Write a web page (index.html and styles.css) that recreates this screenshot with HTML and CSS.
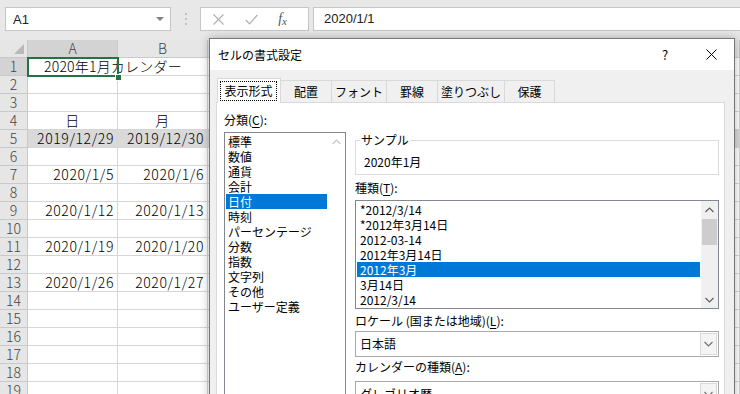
FILE: index.html
```html
<!DOCTYPE html>
<html lang="ja">
<head>
<meta charset="utf-8">
<title>セルの書式設定</title>
<link rel="stylesheet" href="styles.css">
</head>
<body>
<div class="fbar">
  <div class="namebox"><span>A1</span><span class="nb-arrow"></span></div>
  <div class="vdots"><svg width="4" height="14" viewBox="0 0 4 14"><circle cx="2" cy="2" r="1" fill="#b5b5b5"/><circle cx="2" cy="7" r="1" fill="#b5b5b5"/><circle cx="2" cy="12" r="1" fill="#b5b5b5"/></svg></div>
  <div class="fbtns">
    <span class="fb"><svg width="11" height="11" viewBox="0 0 11 11"><path d="M0.5 0.5L10.5 10.5M10.5 0.5L0.5 10.5" stroke="#b0b0b0" stroke-width="1.1" fill="none"/></svg></span>
    <span class="fb"><svg width="13" height="11" viewBox="0 0 13 11"><path d="M0.8 6L4.6 9.8L12.3 1" stroke="#b0b0b0" stroke-width="1.2" fill="none"/></svg></span>
    <span class="fb fx"><i>f</i><i class="fxx">x</i></span>
  </div>
  <div class="finput">2020/1/1</div>
</div>

<div class="sheet">
  <div class="grid">
    <div class="ch corner"><span class="tri"></span></div><div class="ch sel">A</div><div class="ch">B</div><div class="ch"></div>
    <div class="rh sel">1</div><div class="c a1">2020年1月カレンダー</div><div class="c"></div><div class="c"></div>
    <div class="rh">2</div><div class="c"></div><div class="c"></div><div class="c"></div>
    <div class="rh">3</div><div class="c"></div><div class="c"></div><div class="c"></div>
    <div class="rh">4</div><div class="c ctr">日</div><div class="c ctr">月</div><div class="c"></div>
    <div class="rh">5</div><div class="c r fill">2019/12/29</div><div class="c r fill">2019/12/30</div><div class="c fill"></div>
    <div class="rh">6</div><div class="c"></div><div class="c"></div><div class="c"></div>
    <div class="rh">7</div><div class="c r">2020/1/5</div><div class="c r">2020/1/6</div><div class="c"></div>
    <div class="rh">8</div><div class="c"></div><div class="c"></div><div class="c"></div>
    <div class="rh">9</div><div class="c r">2020/1/12</div><div class="c r">2020/1/13</div><div class="c"></div>
    <div class="rh">10</div><div class="c"></div><div class="c"></div><div class="c"></div>
    <div class="rh">11</div><div class="c r">2020/1/19</div><div class="c r">2020/1/20</div><div class="c"></div>
    <div class="rh">12</div><div class="c"></div><div class="c"></div><div class="c"></div>
    <div class="rh">13</div><div class="c r">2020/1/26</div><div class="c r">2020/1/27</div><div class="c"></div>
    <div class="rh">14</div><div class="c"></div><div class="c"></div><div class="c"></div>
    <div class="rh">15</div><div class="c"></div><div class="c"></div><div class="c"></div>
    <div class="rh">16</div><div class="c"></div><div class="c"></div><div class="c"></div>
    <div class="rh">17</div><div class="c"></div><div class="c"></div><div class="c"></div>
    <div class="rh">18</div><div class="c"></div><div class="c"></div><div class="c"></div>
    <div class="rh">19</div><div class="c"></div><div class="c"></div><div class="c"></div>
  </div>
  <div class="selbox"></div>
  <div class="handle"></div>

  <div class="dialog">
    <div class="dtitle">
      <span class="dt-text">セルの書式設定</span>
      <span class="dt-btn">?</span>
      <span class="dt-btn"><svg width="11" height="11" viewBox="0 0 11 11"><path d="M0.5 0.5L10.5 10.5M10.5 0.5L0.5 10.5" stroke="#000" stroke-width="1" fill="none"/></svg></span>
    </div>
    <div class="tabs">
      <div class="tab active w1"><span class="focus">表示形式</span></div>
      <div class="tab w2">配置</div>
      <div class="tab w3">フォント</div>
      <div class="tab w4">罫線</div>
      <div class="tab w5">塗りつぶし</div>
      <div class="tab w6">保護</div>
    </div>
    <div class="panel">
      <div class="col-left">
        <div class="lbl">分類(<u>C</u>):</div>
        <div class="listbox catlist">
          <div class="items">
            <div class="it">標準</div>
            <div class="it">数値</div>
            <div class="it">通貨</div>
            <div class="it">会計</div>
            <div class="it on">日付</div>
            <div class="it">時刻</div>
            <div class="it">パーセンテージ</div>
            <div class="it">分数</div>
            <div class="it">指数</div>
            <div class="it">文字列</div>
            <div class="it">その他</div>
            <div class="it">ユーザー定義</div>
          </div>
          <div class="vscroll off">
            <div class="sbtn"><svg width="9" height="6" viewBox="0 0 9 6"><path d="M0.5 5L4.5 1L8.5 5" stroke="#c8c8c8" stroke-width="1.2" fill="none"/></svg></div>
          </div>
        </div>
      </div>
      <div class="col-right">
        <fieldset class="sample">
          <legend>サンプル</legend>
          <div class="sample-val">2020年1月</div>
        </fieldset>
        <div class="lbl l-type">種類(<u>T</u>):</div>
        <div class="listbox typelist">
          <div class="items">
            <div class="it">*2012/3/14</div>
            <div class="it">*2012年3月14日</div>
            <div class="it">2012-03-14</div>
            <div class="it">2012年3月14日</div>
            <div class="it on">2012年3月</div>
            <div class="it">3月14日</div>
            <div class="it">2012/3/14</div>
          </div>
          <div class="vscroll">
            <div class="sbtn"><svg width="9" height="6" viewBox="0 0 9 6"><path d="M0.5 5L4.5 1L8.5 5" stroke="#606060" stroke-width="1.2" fill="none"/></svg></div>
            <div class="thumb"></div>
            <div class="track"></div>
            <div class="sbtn"><svg width="9" height="6" viewBox="0 0 9 6"><path d="M0.5 1L4.5 5L8.5 1" stroke="#606060" stroke-width="1.2" fill="none"/></svg></div>
          </div>
        </div>
        <div class="lbl l-locale">ロケール (国または地域)(<u>L</u>):</div>
        <div class="combo c-locale"><span class="cv">日本語</span><span class="cbtn"><svg width="9" height="6" viewBox="0 0 9 6"><path d="M0.5 1L4.5 5L8.5 1" stroke="#707070" stroke-width="1.1" fill="none"/></svg></span></div>
        <div class="lbl l-cal">カレンダーの種類(<u>A</u>):</div>
        <div class="combo c-cal"><span class="cv">グレゴリオ暦</span><span class="cbtn"><svg width="9" height="6" viewBox="0 0 9 6"><path d="M0.5 1L4.5 5L8.5 1" stroke="#707070" stroke-width="1.1" fill="none"/></svg></span></div>
      </div>
    </div>
  </div>
</div>
</body>
</html>
```

FILE: styles.css
```css
* { box-sizing: border-box; }
html, body { margin: 0; padding: 0; }
body {
  width: 740px;
  height: 394px;
  overflow: hidden;
  background: #fff;
  font-family: "Noto Sans CJK JP", sans-serif;
}

/* formula bar */
.fbar {
  height: 40px;
  background: #e8e8e8;
  display: flex;
  align-items: flex-start;
  padding: 7px 0 0 5px;
}
.namebox {
  width: 166px;
  height: 24px;
  background: #fff;
  border: 1px solid #c6c6c6;
  display: flex;
  align-items: center;
  justify-content: space-between;
  padding: 0 6px 0 7px;
  font: 13px "Liberation Sans", sans-serif;
  color: #222;
}
.nb-arrow {
  width: 0;
  height: 0;
  border-left: 4px solid transparent;
  border-right: 4px solid transparent;
  border-top: 4px solid #808080;
}
.vdots {
  width: 29px;
  height: 24px;
  display: flex;
  align-items: center;
  justify-content: center;
}
.fbtns {
  width: 109px;
  height: 24px;
  background: #fff;
  border: 1px solid #c6c6c6;
  display: flex;
  align-items: center;
  padding-left: 12px;
}
.fb {
  width: 36px;
  display: flex;
  align-items: center;
}
.fx {
  font: italic 14px "Liberation Serif", serif;
  color: #555;
  padding-left: 2px;
}
.fxx { font-size: 11px; margin-top: 3px; }
.finput {
  flex: 1;
  height: 24px;
  margin-left: 4px;
  background: #fff;
  border: 1px solid #c6c6c6;
  border-right: none;
  padding-left: 10px;
  font: 13px "Liberation Sans", sans-serif;
  line-height: 22px;
  color: #222;
}

/* sheet */
.sheet {
  position: relative;
  height: 354px;
}
.grid {
  display: grid;
  grid-template-columns: 28px 90px 90px 1fr;
  grid-auto-rows: 18px;
  font-size: 14px;
  font-weight: 300;
  color: #000;
}
.ch, .rh {
  background: #e6e6e6;
  color: #444;
  border-right: 1px solid #c9c9c9;
  border-bottom: 1px solid #c9c9c9;
  display: flex;
  align-items: center;
  justify-content: center;
  line-height: 17px;
}
.ch.sel, .rh.sel { background: #d3d3d3; }
.corner { position: relative; }
.tri {
  position: absolute;
  right: 3px;
  bottom: 3px;
  width: 0;
  height: 0;
  border-left: 10px solid transparent;
  border-bottom: 10px solid #b9b9b9;
}
.c {
  border-right: 1px solid #d6d6d6;
  border-bottom: 1px solid #d6d6d6;
  line-height: 17px;
  padding: 0 3px;
  white-space: nowrap;
  letter-spacing: 0.6px;
}
.c.r { text-align: right; }
.c.ctr { text-align: center; }
.c.fill { background: #d9d9d9; }
.a1 { padding-left: 16px; overflow: visible; position: relative; z-index: 1; letter-spacing: 0.2px; }
.selbox {
  position: absolute;
  left: 27px;
  top: 17px;
  width: 92px;
  height: 20px;
  border: 2px solid #217346;
  z-index: 2;
}
.handle {
  position: absolute;
  left: 115px;
  top: 34px;
  width: 7px;
  height: 7px;
  background: #217346;
  border: 1px solid #fff;
  z-index: 3;
}

/* dialog */
.dialog {
  position: absolute;
  left: 209px;
  top: -2px;
  width: 526px;
  height: 400px;
  background: #f0f0f0;
  border: 1px solid #767676;
  box-shadow: 0 0 9px rgba(0, 0, 0, 0.28);
  font-size: 12px;
  color: #000;
  z-index: 5;
  display: flex;
  flex-direction: column;
}
.dtitle {
  height: 31px;
  background: #fff;
  display: flex;
  align-items: center;
  padding-left: 8px;
  flex: none;
}
.dt-text { flex: 1; }
.dt-btn {
  width: 46px;
  height: 31px;
  display: flex;
  align-items: center;
  justify-content: center;
  font-size: 13px;
}
.tabs {
  height: 33px;
  margin-bottom: -1px;
  padding-left: 7px;
  display: flex;
  align-items: flex-end;
  position: relative;
  z-index: 1;
  flex: none;
}
.tab {
  height: 23px;
  border: 1px solid #d9d9d9;
  border-left: none;
  background: #f0f0f0;
  display: flex;
  align-items: center;
  justify-content: center;
  line-height: 16px;
}
.tab.active {
  height: 25px;
  background: #fff;
  border-left: 1px solid #d9d9d9;
  border-bottom: none;
  padding: 2px 3px 2px 2px;
  align-items: stretch;
}
.focus {
  flex: 1;
  border: 1px dotted #000;
  display: flex;
  align-items: center;
  justify-content: center;
}
.w1 { width: 64px; }
.w2 { width: 51px; }
.w3 { width: 55px; }
.w4 { width: 51px; }
.w5 { width: 67px; }
.w6 { width: 50px; }

.panel {
  flex: 1;
  margin: 0 9px 0 6px;
  background: #fff;
  border: 1px solid #d9d9d9;
  display: flex;
  padding: 9px 0 0 7px;
}
.lbl { line-height: 16px; height: 16px; white-space: nowrap; }
.lbl u { text-decoration: underline; text-underline-offset: 2px; }
.col-left { width: 122px; margin-right: 9px; flex: none; }
.col-right { width: 364px; flex: none; }

.listbox {
  border: 1px solid #828790;
  background: #fff;
  display: flex;
}
.items { flex: 1; padding: 1px 1px 0 1px; }
.it { line-height: 15px; height: 15px; padding-left: 2px; white-space: nowrap; }
.it.on { background: #0078d7; color: #fff; }
.catlist { margin-top: 4px; height: 300px; }
.typelist { margin-top: 4px; height: 109px; }
.typelist .it { padding-left: 3px; }
.vscroll {
  width: 17px;
  display: flex;
  flex-direction: column;
  background: #f0f0f0;
}
.vscroll.off { background: #fff; }
.sbtn {
  height: 17px;
  display: flex;
  align-items: center;
  justify-content: center;
  flex: none;
}
.thumb { height: 26px; margin: 1px 1px 0; background: #cdcdcd; flex: none; }
.track { flex: 1; }

.sample {
  margin: 20px 0 0;
  padding: 0 6px;
  border: 1px solid #dcdcdc;
  min-width: 0;
}
.sample legend { padding: 0 1px; line-height: 16px; margin-left: -2px; }
.sample-val { line-height: 16px; padding: 6px 0 4px 2px; }
.l-type { margin-top: 5px; }
.l-locale { margin-top: 4px; }
.l-cal { margin-top: 2px; }
.combo {
  height: 26px;
  border: 1px solid #a9a9a9;
  background: #fff;
  display: flex;
  align-items: stretch;
}
.c-locale { margin-top: 2px; }
.c-cal { margin-top: 6px; }
.cv { flex: 1; padding-left: 4px; line-height: 24px; }
.cbtn {
  width: 17px;
  margin: 1px;
  border: 1px solid #dadada;
  background: #f4f4f4;
  display: flex;
  align-items: center;
  justify-content: center;
}
```
